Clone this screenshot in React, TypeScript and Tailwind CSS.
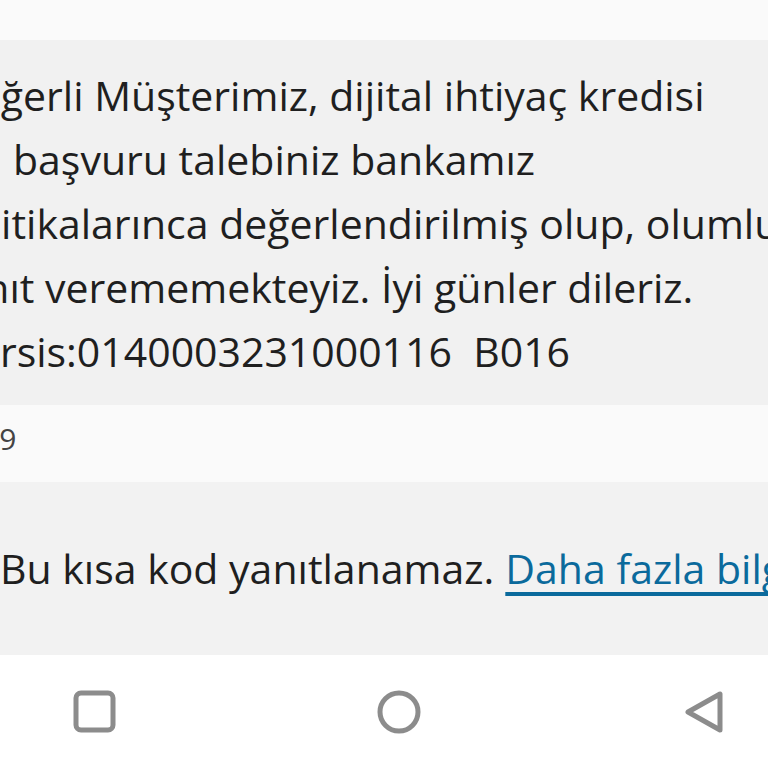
import React from 'react';

const font = { fontFamily: '"Open Sans", "Noto Sans", sans-serif' };

function NavBar() {
  return (
    <div className="h-[113px] bg-white flex items-center justify-between pl-[72px] pr-[42px]">
      {/* recent apps */}
      <svg width="46" height="46" viewBox="0 0 46 46" fill="none">
        <rect x="4" y="4" width="37" height="37" rx="5" stroke="#8c8c8c" strokeWidth="5" />
      </svg>
      {/* home */}
      <svg width="48" height="48" viewBox="0 0 48 48" fill="none">
        <circle cx="24" cy="24" r="19" stroke="#8c8c8c" strokeWidth="5" />
      </svg>
      {/* back */}
      <svg width="46" height="46" viewBox="0 0 46 46" fill="none">
        <path d="M40 5 L40 41 L8 23 Z" stroke="#8c8c8c" strokeWidth="5" strokeLinejoin="round" />
      </svg>
    </div>
  );
}

export default function App() {
  return (
    <div className="w-[768px] h-[768px] overflow-hidden flex flex-col bg-[#fafafa] text-[#1f1f1f]" style={font}>
      <div className="h-[40px] bg-[#fafafa]" />

      {/* Message bubble */}
      <div className="h-[365px] bg-[#f1f1f1] overflow-hidden pt-[23px] text-[41px] leading-[64px] whitespace-nowrap">
        <div className="-ml-[52px]">Değerli Müşterimiz, dijital ihtiyaç kredisi</div>
        <div className="ml-[13px]">başvuru talebiniz bankamız</div>
        <div className="-ml-[59px]">politikalarınca değerlendirilmiş olup, olumlu</div>
        <div className="-ml-[59px]">yanıt verememekteyiz. İyi günler dileriz.</div>
        <div className="-ml-[60px]">Mersis:0140003231000116&nbsp;&nbsp;B016</div>
      </div>

      {/* Timestamp */}
      <div className="h-[77px] bg-[#fafafa] overflow-hidden flex items-center pb-[10px]">
        <span className="-ml-[60px] text-[30px] text-[#444]">10:59</span>
      </div>

      {/* Short code notice */}
      <div className="h-[173px] bg-[#f2f2f2] overflow-hidden flex items-center whitespace-nowrap text-[41px]">
        <span>Bu kısa kod yanıtlanamaz.</span>
        <a className="ml-[11px] text-[#0b6a9c] underline decoration-[4px] underline-offset-[8px] [text-decoration-skip-ink:none]">Daha fazla bilgi edinin</a>
      </div>

      <NavBar />
    </div>
  );
}
